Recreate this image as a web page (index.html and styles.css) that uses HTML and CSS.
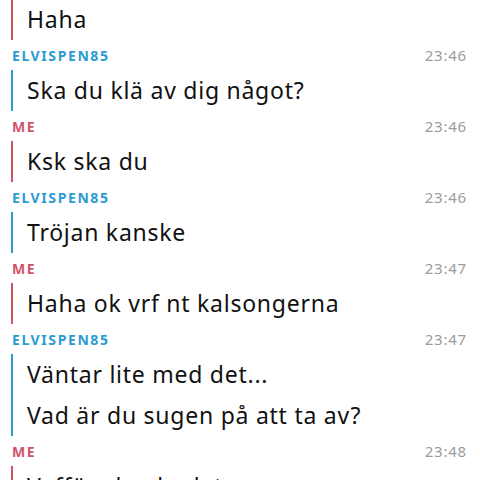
FILE: index.html
```html
<!DOCTYPE html>
<html lang="sv">
<head>
    <meta charset="UTF-8">
    <title>Chatt</title>
    <link rel="stylesheet" href="styles.css">
</head>
<body>
<div class="chat">
    <div class="msg me"><p>Haha</p></div>

    <div class="head"><span class="name other">ELVISPEN85</span><span class="time">23:46</span></div>
    <div class="msg other"><p>Ska du klä av dig något?</p></div>

    <div class="head"><span class="name me">ME</span><span class="time">23:46</span></div>
    <div class="msg me"><p>Ksk ska du</p></div>

    <div class="head"><span class="name other">ELVISPEN85</span><span class="time">23:46</span></div>
    <div class="msg other"><p>Tröjan kanske</p></div>

    <div class="head"><span class="name me">ME</span><span class="time">23:47</span></div>
    <div class="msg me"><p>Haha ok vrf nt kalsongerna</p></div>

    <div class="head"><span class="name other">ELVISPEN85</span><span class="time">23:47</span></div>
    <div class="msg other">
        <p>Väntar lite med det...</p>
        <p>Vad är du sugen på att ta av?</p>
    </div>

    <div class="head"><span class="name me">ME</span><span class="time">23:48</span></div>
    <div class="msg me"><p>Vafför ska du det</p></div>
</div>
</body>
</html>
```

FILE: styles.css
```css
* {
    box-sizing: border-box;
}
body {
    margin: 0;
    background: #ffffff;
    font-family: "Noto Sans", Lato, sans-serif;
    overflow: hidden;
    height: 480px;
}
.chat {
    display: flex;
    flex-direction: column;
    margin-top: -1px;
}
.head {
    display: flex;
    justify-content: space-between;
    align-items: center;
    height: 30px;
    padding: 0 14px 0 12px;
}
.name {
    font-size: 14px;
    font-weight: 700;
    letter-spacing: 1.6px;
}
.name.me {
    color: #d1536a;
}
.name.other {
    color: #2b9bd2;
}
.time {
    font-size: 15px;
    letter-spacing: 0.8px;
    margin-right: -1px;
    color: #9b9b9b;
}
.msg {
    margin: 0 0 0 11px;
    padding-left: 14px;
    border-left: 2px solid #d1536a;
}
.msg.other {
    border-left-color: #2b9bd2;
}
.msg p {
    margin: 0;
    height: 41px;
    line-height: 41px;
    font-size: 23px;
    letter-spacing: 0.75px;
    color: #111111;
}
```
